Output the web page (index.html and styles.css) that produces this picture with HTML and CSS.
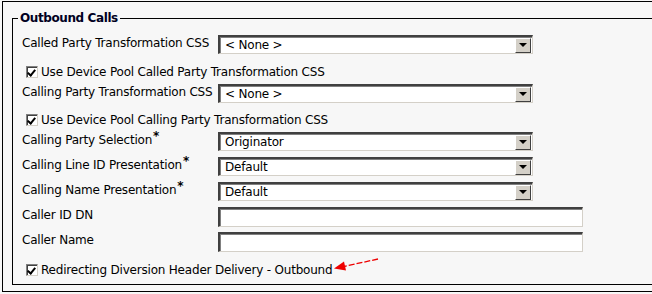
FILE: index.html
```html
<!DOCTYPE html>
<html lang="en">
<head>
  <meta charset="UTF-8">
  <title>Outbound Calls</title>
  <link rel="stylesheet" href="styles.css">
</head>
<body>
  <div class="outer">
    <fieldset class="group">
      <legend>Outbound Calls</legend>

      <div class="row">
        <label>Called Party Transformation CSS</label>
        <div class="select"><span class="value">&lt; None &gt;</span><span class="arrow"></span></div>
      </div>
      <div class="check-row">
        <span class="check checked"></span>
        <span>Use Device Pool Called Party Transformation CSS</span>
      </div>

      <div class="row">
        <label>Calling Party Transformation CSS</label>
        <div class="select"><span class="value">&lt; None &gt;</span><span class="arrow"></span></div>
      </div>
      <div class="check-row second">
        <span class="check checked"></span>
        <span>Use Device Pool Calling Party Transformation CSS</span>
      </div>

      <div class="row">
        <label>Calling Party Selection<span class="req">*</span></label>
        <div class="select"><span class="value">Originator</span><span class="arrow"></span></div>
      </div>
      <div class="row">
        <label>Calling Line ID Presentation<span class="req">*</span></label>
        <div class="select"><span class="value">Default</span><span class="arrow"></span></div>
      </div>
      <div class="row">
        <label>Calling Name Presentation<span class="req">*</span></label>
        <div class="select"><span class="value">Default</span><span class="arrow"></span></div>
      </div>
      <div class="row">
        <label>Caller ID DN</label>
        <input type="text" class="text">
      </div>
      <div class="row">
        <label>Caller Name</label>
        <input type="text" class="text">
      </div>

      <div class="check-row last">
        <span class="check checked"></span>
        <span>Redirecting Diversion Header Delivery - Outbound</span>
      </div>
    </fieldset>

    <svg class="pointer" width="60" height="20" viewBox="0 0 60 20">
      <line x1="56" y1="2" x2="22" y2="9.5" stroke="#ee0000" stroke-width="1.3" stroke-dasharray="6 2"/>
      <polygon points="12,11.5 22,4.6 24,13.4" fill="#ee0000"/>
    </svg>
  </div>
</body>
</html>
```

FILE: styles.css
```css
body {
  margin: 0;
  background-color: #f7f7f7;
  font-family: "DejaVu Sans", Verdana, sans-serif;
  font-size: 12px;
  letter-spacing: -0.2px;
  color: #000;
  overflow: hidden;
}
.outer {
  position: relative;
  margin: 1px 0 0 2px;
  width: 700px;
  padding: 9px 0 6px 9px;
  border: 1px solid #000;
  border-right: none;
}
.group {
  margin: 0;
  padding: 10px 0 3px 9px;
  border: 1px solid #000;
  border-right: none;
}
legend {
  margin-left: -4px;
  padding: 0 2px;
  line-height: 14px;
  font-weight: bold;
  letter-spacing: -0.4px;
  color: #000022;
}
.row {
  display: grid;
  grid-template-columns: 196px auto;
  align-items: start;
  height: 25px;
}
.row label {
  padding-top: 1px;
  line-height: 14px;
}
.req {
  position: relative;
  top: -4px;
  margin-left: 1px;
  font-weight: bold;
}
.select {
  display: flex;
  align-items: center;
  justify-content: space-between;
  box-sizing: border-box;
  width: 315px;
  height: 19px;
  background: #fff;
  border-top: 2px solid #404040;
  border-left: 2px solid #404040;
  border-bottom: 1px solid #d4d0c8;
  border-right: 1px solid #d4d0c8;
  box-shadow: inset 1px 1px 0 #808080;
}
.value {
  padding-left: 5px;
  line-height: 14px;
}
.arrow {
  box-sizing: border-box;
  width: 16px;
  height: 15px;
  margin-right: 1px;
  background: #d4d0c8;
  border-top: 1px solid #fff;
  border-left: 1px solid #fff;
  border-bottom: 1px solid #404040;
  border-right: 1px solid #404040;
  display: flex;
  align-items: center;
  justify-content: center;
}
.arrow::after {
  content: "";
  border-top: 4px solid #000;
  border-left: 4px solid transparent;
  border-right: 4px solid transparent;
}
.text {
  box-sizing: border-box;
  width: 365px;
  height: 20px;
  margin: 0;
  padding: 0 4px;
  background: #fff;
  border-top: 2px solid #404040;
  border-left: 2px solid #404040;
  border-bottom: 1px solid #d4d0c8;
  border-right: 1px solid #d4d0c8;
  box-shadow: inset 1px 1px 0 #808080;
  font: inherit;
}
.check-row {
  display: flex;
  align-items: center;
  gap: 3px;
  height: 24px;
  padding-left: 4px;
  box-sizing: border-box;
  padding-bottom: 1px;
}
.check-row.second {
  height: 23px;
}
.check-row.last {
  padding-top: 3px;
}
.check {
  box-sizing: border-box;
  width: 12px;
  height: 12px;
  background: #fff;
  border-top: 1px solid #808080;
  border-left: 1px solid #808080;
  border-bottom: 1px solid #d4d0c8;
  border-right: 1px solid #d4d0c8;
  box-shadow: inset 1px 1px 0 #404040;
  position: relative;
}
.check.checked::after {
  content: "";
  position: absolute;
  left: 2px;
  top: 1px;
  width: 3px;
  height: 6px;
  border-right: 2px solid #000;
  border-bottom: 2px solid #000;
  transform: rotate(40deg);
}
.pointer {
  position: absolute;
  left: 319px;
  top: 255px;
}
```
